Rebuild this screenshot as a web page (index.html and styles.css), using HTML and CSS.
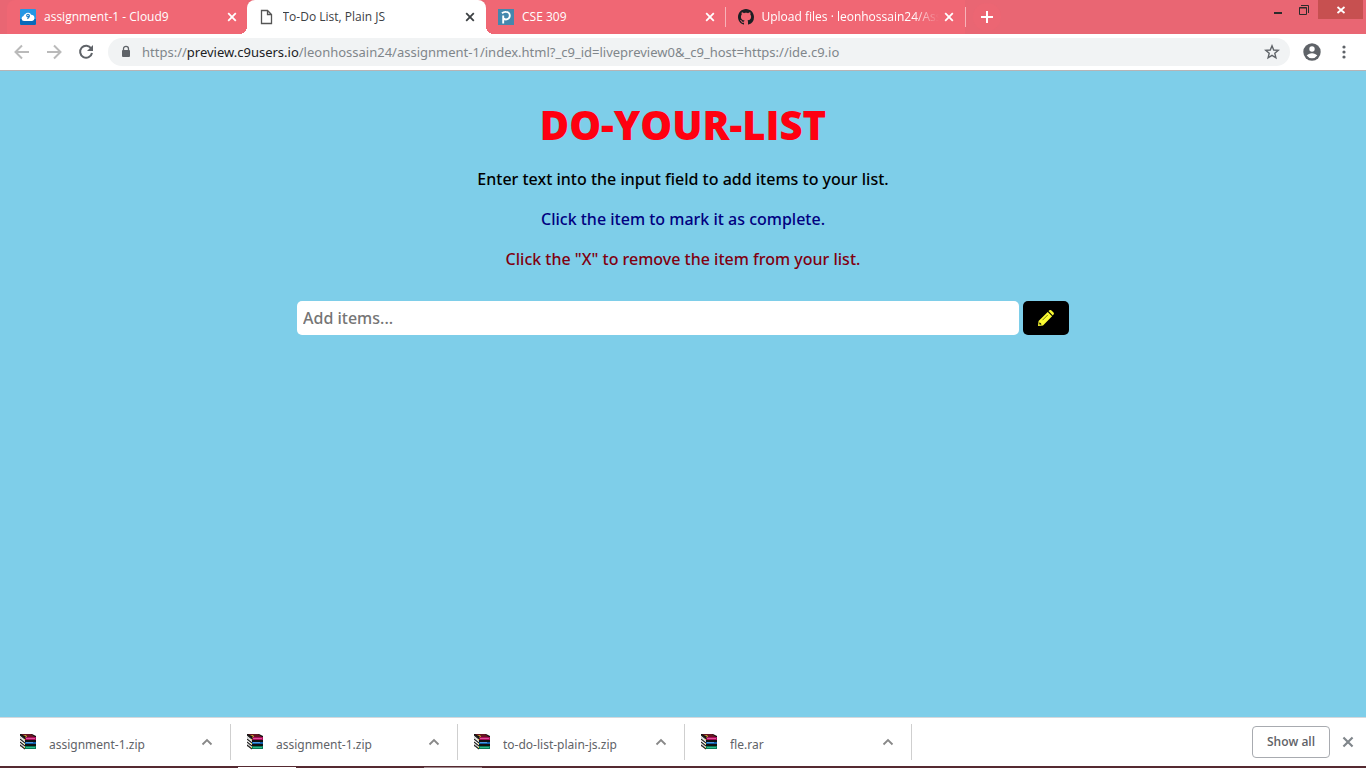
FILE: index.html
```html
<!DOCTYPE html>
<html lang="en">
<head>
<meta charset="utf-8">
<title>To-Do List, Plain JS</title>
<link rel="stylesheet" href="styles.css">
</head>
<body>
<svg class="defs" aria-hidden="true">
  <symbol id="cross" viewBox="0 0 10 10"><path d="M1.2 1.2l7.6 7.6M8.8 1.2L1.2 8.8" fill="none" stroke="currentColor" stroke-width="1.8"/></symbol>
  <symbol id="chevron" viewBox="0 0 12 8"><path d="M1.5 6.500L6 2l4.500 4.500" fill="none" stroke="currentColor" stroke-width="1.8"/></symbol>
  <symbol id="rar" viewBox="0 0 16 16">
    <path d="M0 0h12l4 2v13H5L0 12z" fill="#111"/>
    <path d="M0 1l5 4v10l-5-3z" fill="#fff"/>
    <path d="M0 1l5 4M0 5l5 4M0 8l5 4M0 11l5 4" stroke="#222" stroke-width="1.100"/>
    <path d="M0 3l5 4M0 10l5 3" stroke="#999" stroke-width=".5"/>
    <path d="M1 0h10l4 3H6z" fill="#651422"/>
    <path d="M3 1l3 1-1 2 2-1-1-2z" fill="#d5c832"/>
    <path d="M6 3h10v3H5z" fill="#a80d5a"/><path d="M6 4h9v1H6z" fill="#e0509a"/>
    <path d="M5 8h11v2H5z" fill="#105ea8"/><path d="M6 8h7v1H6z" fill="#4d9ce3"/>
    <path d="M5 12h11v3H5z" fill="#087b59"/><path d="M6 13h9v1H6z" fill="#31bb8a"/>
    <path d="M4 5h1v1H4zM4 9h1v1H4zM4 13h1v1H4z" fill="#e4d94a"/>
  </symbol>
</svg>
<header>
  <div class="strip">
    <nav class="tabs" aria-label="Tabs">
      <div class="tab">
        <svg class="favicon" viewBox="0 0 16 16"><rect width="16" height="16" rx="1" fill="#2396e4"/><path d="M0 10h16v5l-1 1H1l-1-1z" fill="#0869ba"/><path d="M4 12a2.600 2.600 0 0 1-.5-5.100 2.500 2.500 0 0 1 1.800-1.800 3.300 3.300 0 0 1 5.800.6A3.200 3.200 0 0 1 12 12z" fill="#fff"/><circle cx="8" cy="6.600" r="1.300" fill="none" stroke="#1478c4" stroke-width="1.100"/><path d="M9.300 6.600c0 1.900-.6 2.800-2 3.200" fill="none" stroke="#1478c4" stroke-width="1.100"/></svg>
        <a class="title" href="#">assignment-1 - Cloud9</a>
        <button class="close" aria-label="Close tab"><svg><use href="#cross"/></svg></button>
      </div>
      <div class="tab active">
        <svg class="favicon" viewBox="0 0 16 16"><path d="M2.500 1.500h6l4 4v9h-10zM8.500 1.500v4h4" fill="none" stroke="#555" stroke-width="1.300"/></svg>
        <a class="title" href="#" aria-current="page">To-Do List, Plain JS</a>
        <button class="close" aria-label="Close tab"><svg><use href="#cross"/></svg></button>
      </div>
      <div class="tab">
        <svg class="favicon" viewBox="0 0 16 16"><rect width="16" height="16" fill="#4587ad"/><path d="M5.200 14.500V7M4 4.300A5 5 0 0 1 8 2.900a3.700 3.700 0 0 1 0 7.600c-1 0-1.800-.4-2.300-1.100M5.200 8V6.500" fill="none" stroke="#fff" stroke-width="1.900"/></svg>
        <a class="title" href="#">CSE 309</a>
        <button class="close" aria-label="Close tab"><svg><use href="#cross"/></svg></button>
      </div>
      <div class="tab divided">
        <svg class="favicon" viewBox="0 0 16 16"><path fill="#1b1f23" fill-rule="evenodd" d="M8 0C3.580 0 0 3.580 0 8c0 3.540 2.290 6.530 5.470 7.590.4.070.55-.17.55-.38 0-.19-.01-.82-.01-1.490-2.010.37-2.530-.49-2.690-.94-.09-.23-.48-.94-.82-1.130-.28-.15-.68-.52-.01-.53.63-.01 1.080.58 1.230.82.72 1.210 1.870.87 2.330.66.070-.52.280-.87.510-1.070-1.780-.2-3.640-.89-3.640-3.950 0-.87.310-1.590.82-2.150-.08-.2-.36-1.020.08-2.120 0 0 .67-.21 2.200.82.640-.18 1.320-.27 2-.27s1.360.09 2 .27c1.530-1.040 2.200-.82 2.200-.82.440 1.100.160 1.920.08 2.120.510.560.820 1.270.820 2.150 0 3.070-1.870 3.750-3.650 3.950.290.250.540.730.540 1.480 0 1.070-.010 1.930-.010 2.200 0 .210.150.460.550.380A8.010 8.010 0 0 0 16 8c0-4.420-3.580-8-8-8z"/></svg>
        <a class="title fade" href="#">Upload files · leonhossain24/Assi</a>
        <button class="close" aria-label="Close tab"><svg><use href="#cross"/></svg></button>
      </div>
    </nav>
    <button class="new-tab" aria-label="New tab"><svg viewBox="0 0 12 12"><path d="M6 0v12M0 6h12" stroke="#fff" stroke-width="2"/></svg></button>
    <div class="window-buttons">
      <button aria-label="Minimize"><svg viewBox="0 0 10 10"><path d="M1 7h8v2H1z" fill="#2b2b2b"/></svg></button>
      <button aria-label="Restore"><svg viewBox="0 0 10 10"><path d="M.5 2.500h7v7h-7zM.5 3h7M2 .5h7.500V8" fill="none" stroke="#2b2b2b"/></svg></button>
      <button class="quit" aria-label="Close window"><svg viewBox="0 0 10 10"><path d="M1.500 2l7 6M8.500 2l-7 6" stroke="#fff" stroke-width="1.800"/></svg></button>
    </div>
  </div>
  <div class="toolbar">
    <button class="tool" aria-label="Back"><svg class="pale" viewBox="0 0 16 16"><path d="M15 8H2M8 1.500L1.500 8 8 14.500"/></svg></button>
    <button class="tool" aria-label="Forward"><svg class="pale" viewBox="0 0 16 16"><path d="M1 8h13M8 1.500L14.500 8 8 14.500"/></svg></button>
    <button class="tool" aria-label="Reload"><svg viewBox="0 0 16 16"><path d="M13.200 4.500A6 6 0 1 0 14 9"/><path class="solid" d="M15 1v6H9z"/></svg></button>
    <div class="omnibox">
      <svg class="lock" viewBox="0 0 10 14"><path d="M2.500 6V3.800a2.500 2.500 0 0 1 5 0V6" fill="none" stroke="#5f6368" stroke-width="1.300"/><rect x="1" y="5" width="8" height="7" rx="1" fill="#5f6368"/></svg>
      <a class="url" href="#">https://<b>preview.c9users.io</b>/leonhossain24/assignment-1/index.html?_c9_id=livepreview0&amp;_c9_host=https://ide.c9.io</a>
      <button class="star" aria-label="Bookmark"><svg viewBox="0 0 16 16"><path d="M8 1.800l1.700 4.200 4.600.3-3.500 3 1.100 4.500L8 11.400l-3.900 2.400 1.100-4.500-3.500-3 4.600-.3z" fill="none" stroke="#5f6368" stroke-width="1.400"/></svg></button>
    </div>
    <button class="tool profile" aria-label="Profile"><svg viewBox="0 0 18 18"><circle class="solid" cx="9" cy="9" r="8.700"/><circle cx="9" cy="6" r="2.700" class="cut"/><path class="cut" d="M3.700 12.600c1-1.500 3-2.400 5.300-2.400s4.300.9 5.300 2.400A6.500 6.500 0 0 1 9 15.300a6.500 6.500 0 0 1-5.300-2.700z"/></svg></button>
    <button class="tool more" aria-label="Menu"><svg viewBox="0 0 16 16"><circle class="solid" cx="8" cy="3" r="1.600"/><circle class="solid" cx="8" cy="8" r="1.600"/><circle class="solid" cx="8" cy="13" r="1.600"/></svg></button>
  </div>
</header>
<main>
  <h1>DO-YOUR-LIST</h1>
  <p>Enter text into the input field to add items to your list.</p>
  <p class="navy">Click the item to mark it as complete.</p>
  <p class="maroon">Click the "X" to remove the item from your list.</p>
  <form class="entry">
    <input type="text" aria-label="Add items" placeholder="Add items...">
    <button type="button" aria-label="Add"><svg viewBox="0 0 16 16"><path d="M0 16l.6-5L9.700 1.900l4.400 4.400L5 15.400zM10.500 1.100l.8-.7c.8-.6 1.600-.5 2.200.1l2 2c.6.600.6 1.400 0 2l-.7.900z" fill="#fbfb32"/><path d="M4.500 10.200L9.800 4.900" stroke="#777a12" stroke-width="1"/><path d="M1.600 12.300l2 2-1.600.5-.8-.8z" fill="#000"/></svg></button>
  </form>
</main>
<footer>
  <div class="downloads">
    <div class="download"><svg class="archive"><use href="#rar"/></svg><a href="#">assignment-1.zip</a><button aria-label="Options"><svg><use href="#chevron"/></svg></button></div>
    <div class="download"><svg class="archive"><use href="#rar"/></svg><a href="#">assignment-1.zip</a><button aria-label="Options"><svg><use href="#chevron"/></svg></button></div>
    <div class="download"><svg class="archive"><use href="#rar"/></svg><a href="#">to-do-list-plain-js.zip</a><button aria-label="Options"><svg><use href="#chevron"/></svg></button></div>
    <div class="download"><svg class="archive"><use href="#rar"/></svg><a href="#">fle.rar</a><button aria-label="Options"><svg><use href="#chevron"/></svg></button></div>
    <button class="show-all">Show all</button>
    <button class="dismiss" aria-label="Close downloads"><svg><use href="#cross"/></svg></button>
  </div>
  <div class="taskbar"></div>
</footer>
</body>
</html>
```

FILE: styles.css
```css
* { box-sizing: border-box; }
body {
  margin: 0;
  min-height: 100vh;
  display: flex;
  flex-direction: column;
  font: 12px/16px "Open Sans", "Noto Sans", sans-serif;
}
button { border: 0; padding: 0; background: none; font: inherit; display: flex; align-items: center; justify-content: center; flex: none; }
a { color: inherit; text-decoration: none; }
svg { display: block; flex: none; }
.defs { position: absolute; width: 0; height: 0; }

.strip { display: flex; height: 34px; background: #e96673; padding-left: 7px; }
.tabs { display: flex; flex: 0 1 958px; min-width: 0; }
.tab {
  position: relative;
  flex: 1 1 0;
  min-width: 0;
  display: flex;
  align-items: center;
  padding: 0 10px 0 12px;
  background: #f06774;
  color: #fff;
}
.tab:first-child { border-radius: 8px 0 0 0; padding: 0 9px 0 13px; }
.tab.active { background: #fff; color: #3c4043; border-radius: 8px 8px 0 0; z-index: 1; }
.tab.active::before, .tab.active::after {
  content: "";
  position: absolute;
  bottom: 0;
  width: 8px;
  height: 8px;
}
.tab.active::before { right: 100%; background: radial-gradient(circle at 0 0, transparent 8px, #fff 8px); }
.tab.active::after { left: 100%; background: radial-gradient(circle at 100% 0, transparent 8px, #fff 8px); }
.tab.divided::before, .tab.divided::after {
  content: "";
  position: absolute;
  left: -1px;
  top: 7px;
  width: 1px;
  height: 20px;
  background: #f7b3b9;
}
.tab.divided::after { left: 100%; }
.favicon { width: 16px; height: 16px; margin-right: 8px; }
.title { flex: 1; min-width: 0; overflow: hidden; white-space: nowrap; }
.fade { -webkit-mask-image: linear-gradient(90deg, #000 85%, transparent 100%); mask-image: linear-gradient(90deg, #000 85%, transparent 100%); }
.close { width: 12px; height: 16px; margin-left: 4px; color: inherit; }
.close svg { width: 10px; height: 10px; }
.new-tab { width: 28px; height: 28px; margin: 3px 0 0 8px; border-radius: 50%; background: #ec6673; }
.new-tab svg { width: 12px; height: 12px; }
.window-buttons { display: flex; height: 19px; margin-left: auto; padding-right: 3px; }
.window-buttons button { width: 26px; }
.window-buttons svg { width: 10px; height: 10px; }
.window-buttons .quit { width: 45px; background: #c75050; margin-left: 1px; }

.toolbar { display: flex; align-items: center; height: 37px; padding: 0 6px; background: #fff; border-bottom: 1px solid #b6b4b6; }
.tool { width: 32px; height: 32px; }
.tool svg { width: 16px; height: 16px; fill: none; stroke: #5f6368; stroke-width: 2; }
.tool .pale { stroke: #bababa; }
.tool .solid { fill: #5f6368; stroke: none; }
.tool .cut { fill: #fff; stroke: none; }
.profile { margin-left: 6px; }
.tool.profile svg { width: 18px; height: 18px; }
.omnibox { flex: 1; min-width: 0; display: flex; align-items: center; height: 28px; margin-left: 6px; padding: 0 10px 0 13px; border-radius: 14px; background: #f1f3f4; }
.lock { width: 10px; height: 14px; margin-right: 11px; }
.url { flex: 1; min-width: 0; overflow: hidden; white-space: nowrap; font: 13px/20px "Noto Sans", sans-serif; color: #80868b; }
.url b { font-weight: 400; color: #202124; }
.star svg { width: 16px; height: 16px; }

main { flex: 1; padding: 24px 20px; background: #7ecee9; font: 500 16px/24px "Noto Sans", "Open Sans", sans-serif; text-align: center; color: #000; }
h1 { margin: 0 0 12px; font: 800 40px/60px "Open Sans", sans-serif; color: #ff0010; }
main p { margin: 0 0 16px; }
.navy { color: #000080; }
.maroon { color: #800010; }
.entry { display: flex; gap: 4px; max-width: 772px; margin: 30px auto 0; }
.entry input { flex: 1; min-width: 0; height: 34px; padding: 0 6px; border: 0; border-radius: 5px; background: #fff; font: inherit; }
.entry input::placeholder { color: #757575; opacity: 1; }
.entry button { width: 46px; height: 34px; border-radius: 5px; background: #000; }
.entry svg { width: 16px; height: 16px; }

.downloads { display: flex; align-items: center; height: 49px; padding-right: 12px; background: #fff; border-top: 1px solid #d5d8dc; }
.download { flex: 0 1 227px; min-width: 0; display: flex; align-items: center; height: 36px; padding: 0 17px 0 16px; border-right: 1px solid #cfcfcf; color: #5f6368; }
.download:first-child { flex-basis: 231px; padding-left: 20px; }
.archive { width: 16px; height: 16px; margin-right: 13px; }
.download a { flex: 1; min-width: 0; overflow: hidden; white-space: nowrap; padding-top: 5px; font-family: "Noto Sans", sans-serif; }
.download button svg { width: 12px; height: 8px; color: #888; }
.show-all { width: 78px; height: 32px; margin-left: auto; border: 1px solid #a8abb0; border-radius: 4px; color: #5f6368; font-weight: 600; }
.dismiss { width: 12px; height: 16px; margin-left: 12px; color: #80868b; }
.dismiss svg { width: 12px; height: 12px; }
.taskbar { height: 2px; background: linear-gradient(90deg, transparent 238px, #fff 238px, #fff 296px, transparent 296px, transparent 424px, #a08a8e 424px, #a08a8e 482px, transparent 482px) 0 1px / 100% 1px no-repeat #552a31; }
```
